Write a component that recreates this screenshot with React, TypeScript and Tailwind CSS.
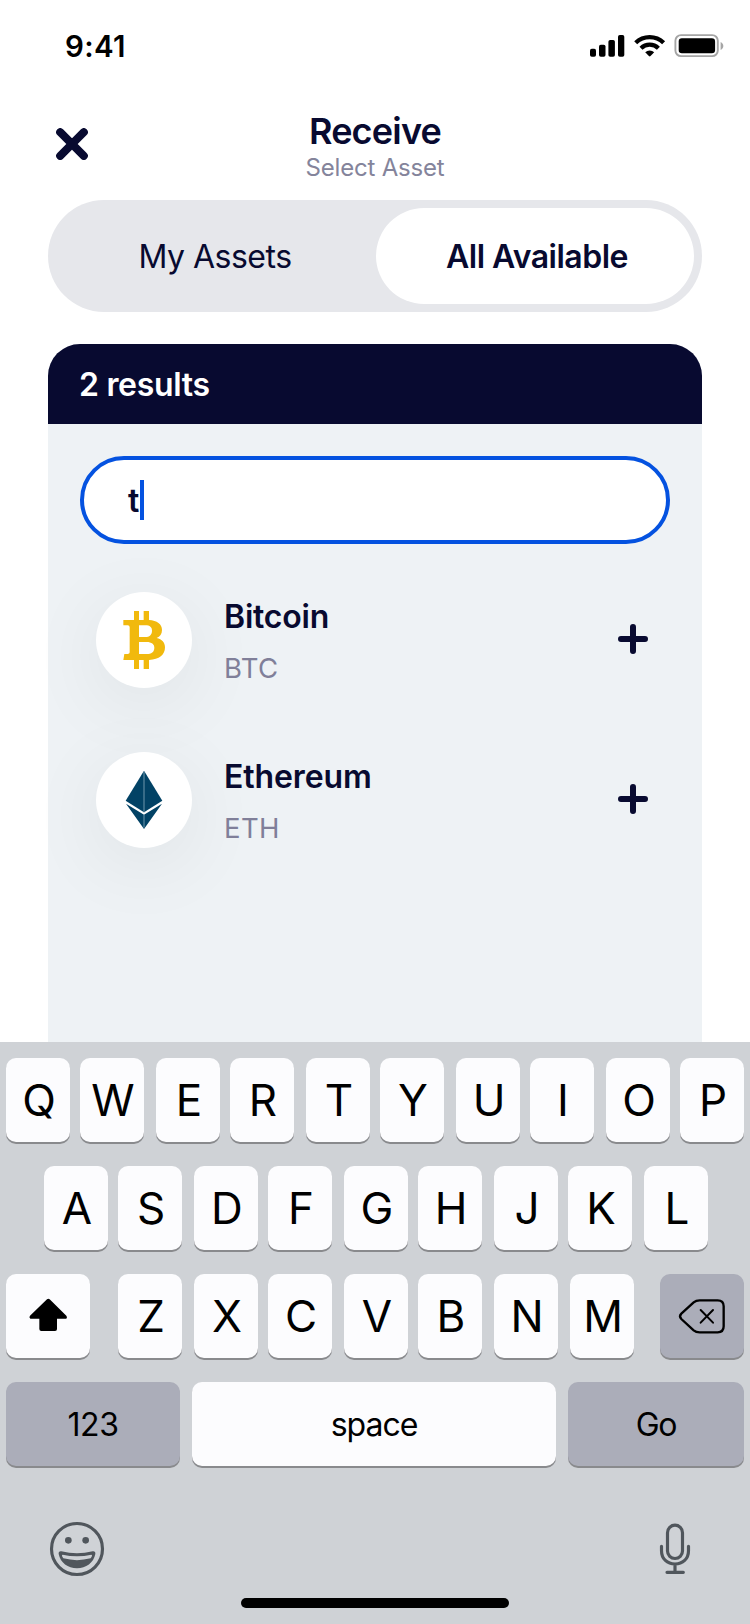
import React from "react";

type KeyProps = { children: React.ReactNode; className?: string; dark?: boolean };

function Key({ children, className = "w-16 text-[44px] pl-0.5", dark = false }: KeyProps) {
  return (
    <button
      className={`flex h-[84px] shrink-0 items-center justify-center rounded-[10px] leading-none text-black shadow-[0_2px_0_#898a8d] ${
        dark ? "bg-[#abadb9]" : "bg-[#fcfcfe]"
      } ${className}`}
    >
      {children}
    </button>
  );
}

function KeyGroups({ groups }: { groups: string[] }) {
  return (
    <div className="flex gap-3">
      {groups.map((group) => (
        <div key={group} className="flex gap-2.5">
          {group.split("").map((letter) => (
            <Key key={letter}>{letter}</Key>
          ))}
        </div>
      ))}
    </div>
  );
}

function StatusIcons() {
  return (
    <svg className="h-[26px] w-[136px]" viewBox="0 0 136 26">
      <rect x="2" y="15.7" width="6" height="8" rx="1.8" />
      <rect x="11" y="11.7" width="6.5" height="12" rx="1.8" />
      <rect x="20.4" y="7" width="6.5" height="16.7" rx="1.8" />
      <rect x="30" y="2" width="6.3" height="21.7" rx="1.8" />
      <g fill="none" stroke="#000" strokeWidth="4.3">
        <path d="M47.7 9.7a20 20 0 0 1 27.9 0" />
        <path d="M53 15.2a12.6 12.6 0 0 1 17.4 0" />
      </g>
      <path d="M57.2 19.2a6.8 6.8 0 0 1 9 0l-3.7 3.8q-.8.8-1.6 0z" />
      <rect x="87.4" y="2.1" width="42.4" height="21" rx="5.6" fill="none" stroke="#a5a5a5" strokeWidth="1.9" />
      <rect x="90.7" y="5.3" width="36.4" height="15" rx="3.2" />
      <path d="M132.6 9v8c3.6-1.4 3.6-6.6 0-8z" fill="#a5a5a5" />
    </svg>
  );
}

function BitcoinIcon() {
  return (
    <svg className="size-24" viewBox="288 486 288 288" fill="#f1b90d">
      <path
        fillRule="evenodd"
        d="M370 570H402V543H417V570H431V543H447V570C471 572 486 582 486 600C486 612 480 620 470 624C486 628 495 637 495 652C495 675 478 688 447 690V717H431V690H417V717H402V690H370L373 672H383Q389 672 389 667V592Q389 586 383 586H370ZM417 586H436C450 586 456 592 456 602C456 614 448 621 436 621H417ZM417 636H440C455 636 463 643 463 653C463 666 454 672 440 672H417Z"
      />
    </svg>
  );
}

function EthereumIcon() {
  return (
    <svg className="size-24" viewBox="288 186 288 288">
      <path d="M432 242L487 332L432 367L377 332Z" fill="#024265" />
      <path d="M378 341L432 374L486 341L432 417Z" fill="#024265" />
      <path d="M432 246V367M432 375V413" stroke="#6f96ac" strokeWidth="3" />
    </svg>
  );
}

function PlusIcon() {
  return (
    <svg className="size-[30px]" viewBox="0 0 30 30" stroke="#080a30" strokeWidth="6" strokeLinecap="round">
      <path d="M15 3V27M3 15H27" />
    </svg>
  );
}

type AssetProps = { icon: React.ReactNode; name: React.ReactNode; ticker: React.ReactNode };

function AssetRow({ icon, name, ticker }: AssetProps) {
  return (
    <div className="flex h-24 items-center">
      <div className="size-24 shrink-0 rounded-full bg-white shadow-[0_16px_80px_rgba(0,0,0,0.07)]">{icon}</div>
      <div className="ml-8 flex flex-1 flex-col">
        <div className="h-[52px] text-[32px] leading-[50px] font-semibold">{name}</div>
        <div className="h-11 text-[27.5px] leading-[48px] text-[#807f99]">{ticker}</div>
      </div>
      <button className="mr-1.5 -mt-0.5">
        <PlusIcon />
      </button>
    </div>
  );
}

export default function App() {
  return (
    <div className="flex h-[1624px] w-[750px] flex-col overflow-hidden bg-white font-['Inter',sans-serif] text-[#080a30]">
      <div className="flex h-[92px] shrink-0 items-center justify-between pr-[26px] pl-[65px] text-black">
        <span className="pt-px text-[29.5px] font-semibold tracking-[0.3px]">9:41</span>
        <StatusIcons />
      </div>

      <header className="grid h-[108px] shrink-0 grid-cols-[1fr_auto_1fr] px-14">
        <button className="mt-9 size-8">
          <svg viewBox="0 0 32 32" stroke="#080a30" strokeWidth="8" strokeLinecap="round">
            <path d="M4.2 4.2L27.8 27.8M27.8 4.2L4.2 27.8" />
          </svg>
        </button>
        <div className="text-center">
          <h1 className="mt-[19px] h-10 text-[36px] leading-10 font-semibold tracking-[-0.8px]">Receive</h1>
          <p className="mt-[3px] text-[24px] leading-7 tracking-[-0.2px] text-[#84849b]">Select Asset</p>
        </div>
      </header>

      <div className="mx-12 flex h-28 shrink-0 rounded-full bg-[#e6e7eb] p-2 text-[32px]">
        <button className="w-80 pt-0.5 pr-0.5 tracking-[-0.5px]">My Assets</button>
        <button className="w-[318px] rounded-full bg-white pt-0.5 pl-1 font-semibold tracking-[-0.5px]">
          All Available
        </button>
      </div>

      <main className="mx-12 mt-8 h-[698px] shrink-0 rounded-t-[32px] bg-[#eef2f5]">
        <div className="h-20 rounded-t-[32px] bg-[#080a30] pl-[31px] text-[32px] leading-[82px] font-semibold tracking-[-0.3px] text-white">
          2 results
        </div>
        <div className="mx-8 mt-8 flex h-22 items-center rounded-full border-4 border-[#0452e0] bg-white pl-11 text-[32px] font-semibold">
          <span className="w-3 pt-0.5">t</span>
          <span className="h-10 w-1 bg-[#0452e0]" />
        </div>
        <div className="mt-12 flex flex-col gap-16 px-12">
          <AssetRow
            icon={<BitcoinIcon />}
            name={<span className="tracking-[-0.2px]">Bitcoin</span>}
            ticker={<span className="tracking-[0.3px]">BTC</span>}
          />
          <AssetRow
            icon={<EthereumIcon />}
            name={<span className="tracking-[-0.1px]">Ethereum</span>}
            ticker={<span className="tracking-[0.4px]">ETH</span>}
          />
        </div>
      </main>

      <section className="relative flex h-[582px] shrink-0 flex-col gap-6 bg-[#cfd2d6] px-1.5 pt-4">
        <KeyGroups groups={["QW", "ER", "TY", "UI", "OP"]} />
        <div className="pl-[38px]">
          <KeyGroups groups={["AS", "DF", "GH", "JK", "L"]} />
        </div>
        <div className="flex">
          <Key className="mr-7 w-[84px]">
            <svg className="size-[84px]" viewBox="18 732 252 252">
              <path d="M141 808Q145 804 149 808L199 857Q203 862 199 866H171V897Q171 903 165 903H124Q118 903 118 897V866H91Q86 862 90 857Z" />
            </svg>
          </Key>
          <KeyGroups groups={["Z", "XC", "VB", "N", "M"]} />
          <Key dark className="ml-[26px] w-[84px]">
            <svg className="size-[84px]" viewBox="855 732 252 252" fill="none" stroke="#000" strokeLinejoin="round" strokeLinecap="round">
              <path
                strokeWidth="7"
                d="M974 811H1028Q1046 811 1046 829V889Q1046 907 1028 907H974Q963 907 956 901L919 867Q911 859 919 851L956 817Q963 811 974 811Z"
              />
              <path strokeWidth="6" d="M977 840L1014 878M1014 840L977 878" />
            </svg>
          </Key>
        </div>
        <div className="flex gap-3 text-[32px]">
          <Key dark className="w-[174px] pt-0.5 tracking-[-0.4px]">123</Key>
          <Key className="w-[364px] pt-0.5 tracking-[-1px]">space</Key>
          <Key dark className="w-[176px] pt-0.5 tracking-[-1.3px]">Go</Key>
        </div>
        <div className="mt-[31px] flex h-[56px] justify-between pr-[53px] pl-[43px]">
          <svg className="h-[56px] w-[56px]" viewBox="147 483 168 168" fill="#50565c">
            <circle cx="231" cy="567" r="76.5" fill="none" stroke="#50565c" strokeWidth="9.5" />
            <circle cx="205" cy="541" r="10" />
            <circle cx="257" cy="541" r="10" />
            <path
              fillRule="evenodd"
              d="M184 574Q231 586 278 574Q287 573 286 582C281 608 258 625 231 625C204 625 181 608 176 582Q175 573 184 574ZM188 584Q184 584 187 590L190 595Q231 606 272 595L275 590Q278 584 274 584Q231 594 188 584Z"
            />
          </svg>
          <svg className="h-[56px] w-[32px]" viewBox="852 483 96 168" fill="none" stroke="#50565c" strokeWidth="9.5" strokeLinecap="round">
            <rect x="877.5" y="495.5" width="45" height="100" rx="22.5" />
            <path d="M859.5 559V572C859.5 597 877 612 900 612C923 612 940.5 597 940.5 572V559M900 612V636M876 637H925" />
          </svg>
        </div>
        <div className="absolute bottom-4 left-[241px] h-2.5 w-[268px] rounded-full bg-black" />
      </section>
    </div>
  );
}
